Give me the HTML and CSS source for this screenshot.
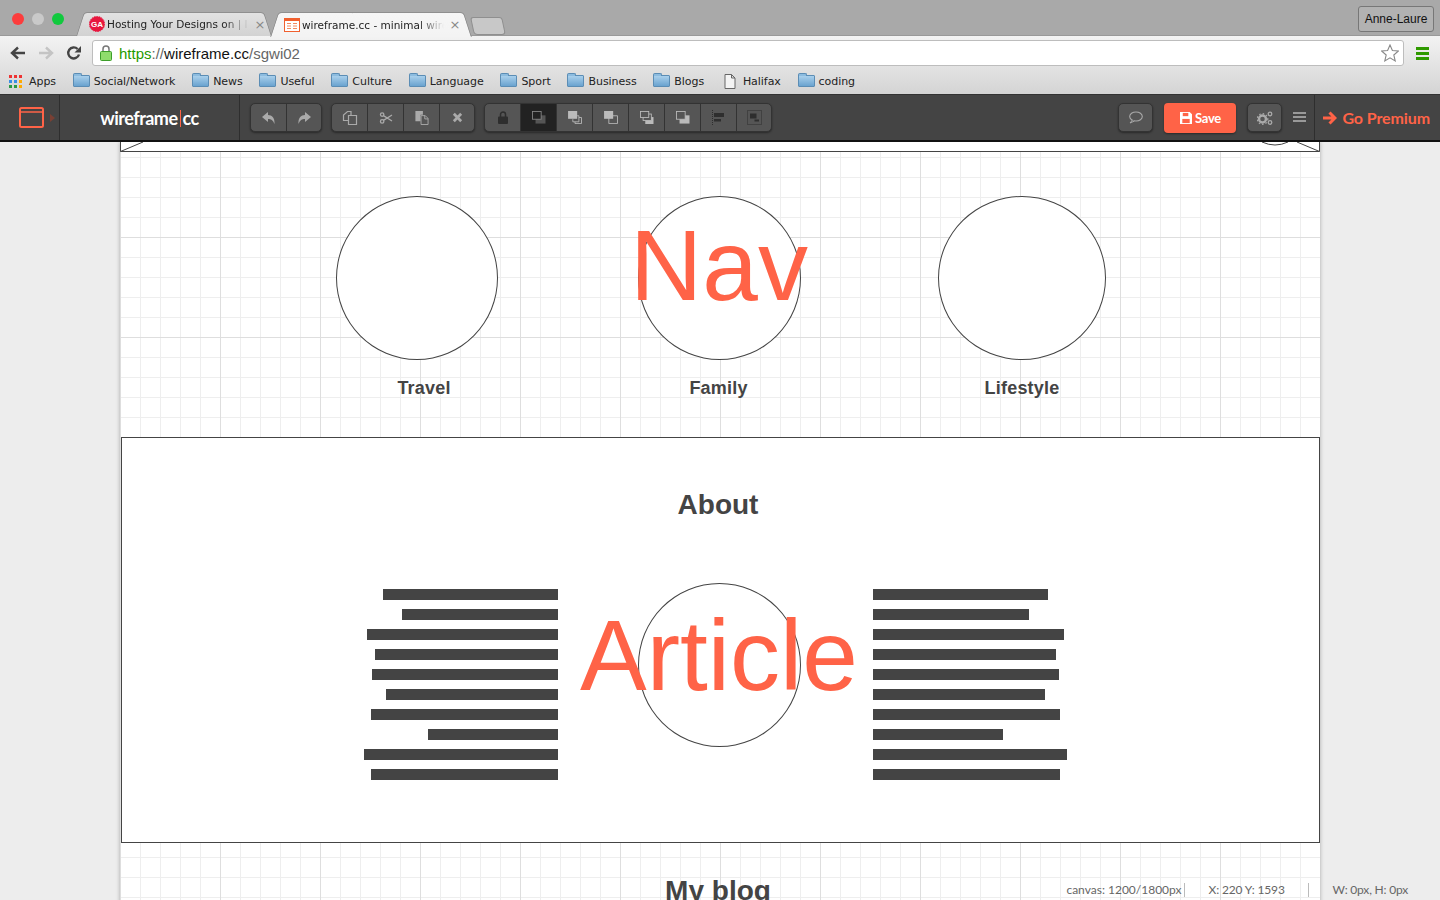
FILE: index.html
```html
<!DOCTYPE html>
<html>
<head>
  <title>wireframe.cc - minimal wireframing tool</title>
  <meta charset="utf-8" />
  <link rel="stylesheet" href="styles.css">
</head>
<body>

<div class="browser">
  <div class="tabstrip">
    <div class="lights"><i class="light red"></i><i class="light grey"></i><i class="light green"></i></div>
    <div class="tabs">
      <div class="tab">
        <svg class="favicon" viewBox="0 0 16 16" width="16" height="16"><circle cx="8" cy="8" r="7.6" fill="#e8173f" stroke="#e8173f" stroke-dasharray="1.5 1"/><text x="8" y="11" text-anchor="middle" class="ga">GA</text></svg>
        <span class="tab-title">Hosting Your Designs on | I</span>
        <span class="tab-x">&#215;</span>
      </div>
      <div class="tab active">
        <svg class="favicon" viewBox="0 0 16 14" width="16" height="14"><rect x=".5" y=".5" width="15" height="13" fill="#fff" stroke="#f0602f"/><rect x="1" y="1" width="14" height="2" fill="#f0602f"/><path d="M3 5.500h4M3 8h4M3 10.500h4M9 5.500h4M9 8h4M9 10.500h4" stroke="#f28a60"/></svg>
        <span class="tab-title">wireframe.cc - minimal wire</span>
        <span class="tab-x">&#215;</span>
      </div>
      <div class="tab-new"></div>
    </div>
    <div class="profile">Anne-Laure</div>
  </div>

  <div class="urlbar">
    <svg class="nav-icon" viewBox="0 0 16 14" width="16" height="14"><path d="M15 7H3M8 1.500 2 7l6 5.500" fill="none" stroke="#444" stroke-width="2.400"/></svg>
    <svg class="nav-icon" viewBox="0 0 16 14" width="16" height="14"><path d="M1 7h12M8 1.500 14 7l-6 5.500" fill="none" stroke="#c4c4c4" stroke-width="2.400"/></svg>
    <svg class="nav-icon" viewBox="0 0 16 16" width="16" height="16"><path d="M13 9.500A5.500 5.500 0 1 1 11.600 4" fill="none" stroke="#444" stroke-width="2.400"/><path d="M15 1v6.500H8.500z" fill="#444"/></svg>
    <div class="omnibox">
      <svg class="lock" viewBox="0 0 12 16" width="12" height="16"><path d="M3 7V4a3 3 0 0 1 6 0v3" fill="none" stroke="#777" stroke-width="1.500"/><rect x=".5" y="6.500" width="11" height="9" rx="1" fill="#8fdc6c" stroke="#3d9e2a"/></svg>
      <span class="url"><span class="url-https">https</span><span class="url-dim">://</span>wireframe.cc<span class="url-dim">/sgwi02</span></span>
      <svg class="star" viewBox="0 0 18 18" width="18" height="18"><path d="M9 1l2.400 5.500 6 .5-4.600 4 1.400 5.900L9 13.800l-5.200 3.100 1.400-5.900-4.600-4 6-.5z" fill="#fff" stroke="#888" stroke-width="1.100"/></svg>
    </div>
    <div class="chrome-menu"><i></i><i></i><i></i></div>
  </div>

  <div class="bookmarks">
    <div class="bookmark"><svg viewBox="0 0 13 13" width="13" height="13"><path d="M0 1.500h3M5 1.500h3M10 1.500h3" stroke="#e33" stroke-width="3"/><path d="M0 6.500h3M5 6.500h3" stroke="#3a8ee6" stroke-width="3"/><path d="M10 6.500h3" stroke="#fa0" stroke-width="3"/><path d="M0 11.500h3M5 11.500h3" stroke="#2a9a44" stroke-width="3"/><path d="M10 11.500h3" stroke="#fa0" stroke-width="3"/></svg><span class="apps-label">Apps</span></div>
    <div class="bookmark"><i class="folder"></i>Social/Network</div>
    <div class="bookmark"><i class="folder"></i>News</div>
    <div class="bookmark"><i class="folder"></i>Useful</div>
    <div class="bookmark"><i class="folder"></i>Culture</div>
    <div class="bookmark"><i class="folder"></i>Language</div>
    <div class="bookmark"><i class="folder"></i>Sport</div>
    <div class="bookmark"><i class="folder"></i>Business</div>
    <div class="bookmark"><i class="folder"></i>Blogs</div>
    <div class="bookmark"><svg class="file" viewBox="0 0 12 15" width="12" height="15"><path d="M1 .5h6.500L11 4v10.500H1zM7.500.5V4H11" fill="#f4f4f4" stroke="#666"/></svg>Halifax</div>
    <div class="bookmark"><i class="folder"></i>coding</div>
  </div>
</div>

<div class="appbar">
  <div class="app-menu">
    <svg viewBox="0 0 25 21" width="25" height="21"><rect x="1" y="1" width="23" height="19" rx="1.500" fill="none" stroke="#ff6347" stroke-width="2"/><path d="M1 5h23" stroke="#ff6347" stroke-width="1.500"/></svg>
    <i class="app-caret"></i>
  </div>
  <div class="brand">wireframe<span class="brand-bar"></span>cc</div>

  <div class="group first">
    <div class="btn"><svg viewBox="0 0 16 14" width="16" height="14"><path d="M7 1 1 6l6 5V8c3 0 5 1 6.500 5C14 7 11 4 7 4z" fill="#aaa"/></svg></div>
    <div class="btn"><svg viewBox="0 0 16 14" width="16" height="14"><path d="M9 1l6 5-6 5V8c-3 0-5 1-6.500 5C2 7 5 4 9 4z" fill="#aaa"/></svg></div>
  </div>
  <div class="group">
    <div class="btn"><svg viewBox="0 0 16 16" width="16" height="16"><path d="M6.500 10.500H1.500V5l4-3.500h3.500V5" fill="none" stroke="#aaa" stroke-width="1.200"/><path d="M6.500 5.500h8v9h-8z" fill="#555" stroke="#aaa" stroke-width="1.200"/></svg></div>
    <div class="btn"><svg viewBox="0 0 16 14" width="14" height="12"><circle cx="3.500" cy="3" r="2" fill="none" stroke="#aaa" stroke-width="1.500"/><circle cx="3.500" cy="11" r="2" fill="none" stroke="#aaa" stroke-width="1.500"/><path d="M5 4.200 15 10.500M5 9.800 15 3.500" stroke="#aaa" stroke-width="1.500"/></svg></div>
    <div class="btn"><svg viewBox="0 0 16 16" width="15" height="15"><path d="M1.500 1h8v4H7v7H1.500z" fill="#aaa"/><path d="M7.500 6h4.500l3 3v6.500H7.500z" fill="#555" stroke="#aaa"/><path d="M11.500 6v3.500H15" fill="none" stroke="#aaa"/></svg></div>
    <div class="btn"><svg viewBox="0 0 12 12" width="11" height="11"><path d="M2 2l8 8M10 2l-8 8" stroke="#aaa" stroke-width="3"/></svg></div>
  </div>
  <div class="group">
    <div class="btn"><svg viewBox="0 0 10 13" width="10" height="13"><path d="M2.500 6V3.500a2.500 2.500 0 0 1 5 0V6" fill="none" stroke="#2e2e2e" stroke-width="1.500"/><rect y="5.500" width="10" height="7.500" rx="1" fill="#2e2e2e"/></svg></div>
    <div class="btn on"><svg viewBox="0 0 16 15" width="14" height="13"><rect x="4" y="5" width="11.500" height="9.500" fill="#555"/><rect x=".5" y=".5" width="10" height="9" fill="#222" stroke="#888"/></svg></div>
    <div class="btn"><svg viewBox="0 0 16 15" width="14" height="13"><path d="M5.500 9.500v3h7v-7h-2M8 12.500v2h7.500v-7h-3" fill="none" stroke="#bbb"/><rect width="10.500" height="9" fill="#bbb"/></svg></div>
    <div class="btn"><svg viewBox="0 0 16 15" width="14" height="13"><path d="M5.500 8v6.500h10v-9H10" fill="none" stroke="#bbb"/><rect width="10.500" height="9" fill="#bbb"/></svg></div>
    <div class="btn"><svg viewBox="0 0 16 15" width="14" height="13"><rect x="6" y="7" width="9.500" height="8" fill="#bbb"/><rect x="3.500" y="3.500" width="9.500" height="7.500" fill="#555" stroke="#bbb"/><rect x=".5" y=".5" width="9.500" height="7" fill="#555" stroke="#bbb"/></svg></div>
    <div class="btn"><svg viewBox="0 0 16 15" width="14" height="13"><rect x="4" y="5" width="11.500" height="9.500" fill="#bbb"/><rect x=".5" y=".5" width="10" height="9" fill="#555" stroke="#bbb"/></svg></div>
    <div class="btn"><svg viewBox="0 0 13 15" width="13" height="15"><path d="M.5 0v15" stroke="#2e2e2e" stroke-dasharray="1 1"/><rect x="2" y="3" width="10" height="4" fill="#2e2e2e"/><rect x="2" y="9" width="7" height="2.500" fill="#2e2e2e"/></svg></div>
    <div class="btn"><svg viewBox="0 0 15 15" width="15" height="15"><rect x=".5" y=".5" width="14" height="14" fill="none" stroke="#2e2e2e" stroke-dasharray="1 1"/><rect x="3" y="3.500" width="6.500" height="5" fill="#2e2e2e"/><rect x="7.500" y="9.500" width="4.500" height="2" fill="#2e2e2e"/></svg></div>
  </div>

  <div class="appbar-right">
    <div class="btn solo"><svg viewBox="0 0 15 13" width="15" height="13"><ellipse cx="8" cy="5.500" rx="6.300" ry="4.500" fill="none" stroke="#aaa" stroke-width="1.100"/><path d="M4.500 9 2 12l4.500-2" fill="#555" stroke="#aaa"/></svg></div>
    <div class="save"><svg viewBox="0 0 13 13" width="12" height="12"><path d="M0 0h10.500L13 2.500V13H0z" fill="#fff"/><rect x="3" y="1" width="6" height="3.500" fill="#ff6347"/><rect x="2.500" y="7.500" width="8" height="4.500" fill="#ff6347"/></svg>Save</div>
    <div class="btn solo"><svg viewBox="0 0 16 14" width="16" height="14"><circle cx="5.500" cy="8" r="3.500" fill="none" stroke="#aaa" stroke-width="2.400"/><circle cx="13" cy="3" r="1.800" fill="none" stroke="#aaa" stroke-width="1.300"/><circle cx="13" cy="11.500" r="1.800" fill="none" stroke="#aaa" stroke-width="1.300"/><circle cx="5.500" cy="8" r="5.300" fill="none" stroke="#aaa" stroke-width="1.200" stroke-dasharray="1.500 2"/></svg></div>
    <div class="menu-icon"><i></i><i></i><i></i></div>
    <div class="premium"><svg viewBox="0 0 15 14" width="15" height="14"><path d="M1 7h11M7.500 1.500 13 7l-5.500 5.500" fill="none" stroke="#ff6347" stroke-width="3"/></svg>Go Premium</div>
  </div>
</div>

<div class="workspace">
  <div class="canvas">
    <svg class="top-image" viewBox="0 0 1200 10" width="1200" height="10">
      <path d="M.5 0v9.500h1199V0" fill="#fff" stroke="#444"/>
      <path d="M.5 9.500 23 0M1199.500 9.500 1177 0" stroke="#444" fill="none"/>
      <path d="M1142 0Q1155 6 1168 0" fill="none" stroke="#444"/>
    </svg>

    <div class="circle travel"></div>
    <div class="circle family"></div>
    <div class="circle lifestyle"></div>
    <div class="big-text nav-text">Nav</div>
    <div class="label travel-label">Travel</div>
    <div class="label family-label">Family</div>
    <div class="label lifestyle-label">Lifestyle</div>

    <div class="about-box"></div>
    <div class="heading about-heading">About</div>
    <div class="lines lines-left">
      <i style="width:175px"></i><i style="width:156px"></i><i style="width:191px"></i><i style="width:183px"></i><i style="width:186px"></i><i style="width:172px"></i><i style="width:187px"></i><i style="width:130px"></i><i style="width:194px"></i><i style="width:187px"></i>
    </div>
    <div class="circle article"></div>
    <div class="big-text article-text">Article</div>
    <div class="lines lines-right">
      <i style="width:175px"></i><i style="width:156px"></i><i style="width:191px"></i><i style="width:183px"></i><i style="width:186px"></i><i style="width:172px"></i><i style="width:187px"></i><i style="width:130px"></i><i style="width:194px"></i><i style="width:187px"></i>
    </div>
    <div class="heading blog-heading">My blog</div>
  </div>

  <div class="status">
    <span class="status-item canvas-size">canvas: 1200/1800px</span>
    <span class="status-item coords">X: 220 Y: 1593</span>
    <span class="status-last">W: 0px, H: 0px</span>
  </div>
</div>

</body>
</html>
```

FILE: styles.css
```css
html, body {
  margin: 0;
  height: 900px;
  overflow: hidden;
}
body {
  font-family: "DejaVu Sans", sans-serif;
  background: #ededed;
}
i {
  display: block;
}

/* browser chrome */
.browser {
  height: 94px;
  background: linear-gradient(#f3f3f3 36px, #d4d4d4 94px);
}
.tabstrip {
  height: 36px;
  background: #a9a9a9;
  border-bottom: 1px solid #999;
  box-sizing: border-box;
  display: flex;
  position: relative;
}
.lights {
  display: flex;
  gap: 8px;
  padding: 13px 0 0 12px;
  width: 64px;
}
.light {
  width: 12px;
  height: 12px;
  border-radius: 50%;
}
.red { background: #fc3c3c; }
.grey { background: #c9c9c9; }
.green { background: #11c93e; }
.tabs {
  display: flex;
  height: 24px;
  margin-top: 12px;
}
.tab {
  position: relative;
  isolation: isolate;
  width: 196px;
  height: 24px;
  box-sizing: border-box;
  display: flex;
  align-items: center;
  padding: 0 6px 0 13px;
  font-size: 10.5px;
  color: #222;
}
.tab::before, .tab::after {
  content: "";
  position: absolute;
  z-index: -1;
  top: 0;
  bottom: 0;
  width: 55%;
  background: linear-gradient(#e2e2e2, #d2d2d2);
  border-top: 1px solid #8f8f8f;
}
.tab::before {
  left: 0;
  border-left: 1px solid #8f8f8f;
  border-radius: 4px 0 0 0;
  transform: skewX(-18deg);
  transform-origin: bottom left;
}
.tab::after {
  right: 0;
  border-right: 1px solid #8f8f8f;
  border-radius: 0 4px 0 0;
  transform: skewX(18deg);
  transform-origin: bottom right;
}
.tab.active {
  z-index: 1;
  margin-left: -2px;
  width: 202px;
  padding: 0 11px 0 14px;
  height: 25px;
}
.tab.active::before, .tab.active::after {
  background: linear-gradient(#f6f6f6, #f3f3f3);
}
.favicon {
  flex: none;
  margin-right: 2px;
}
.ga {
  font-family: "Liberation Sans", sans-serif;
  font-size: 8px;
  font-weight: bold;
  fill: #fff;
}
.tab-title {
  flex: 1;
  white-space: nowrap;
  overflow: hidden;
  -webkit-mask-image: linear-gradient(to right, #000 82%, transparent 100%);
  mask-image: linear-gradient(to right, #000 82%, transparent 100%);
}
.tab-x {
  flex: none;
  width: 12px;
  margin-left: 5px;
  font-size: 13px;
  line-height: 15px;
  color: #888;
  text-align: center;
}
.tab-new {
  width: 30px;
  height: 16px;
  margin: 5px 0 0 0;
  background: #c8c8c8;
  border: 1px solid #8f8f8f;
  border-radius: 3px 3px 4px 4px;
  transform: skewX(12deg);
}
.profile {
  position: absolute;
  right: 6px;
  top: 6px;
  width: 76px;
  height: 26px;
  box-sizing: border-box;
  border: 1px solid #777;
  border-radius: 3px;
  background: #b2b2b2;
  font-family: "Liberation Sans", sans-serif;
  font-size: 12px;
  line-height: 25px;
  text-align: center;
  color: #111;
}

.urlbar {
  height: 34px;
  display: flex;
  align-items: center;
  padding: 0 11px 0 10px;
}
.nav-icon {
  flex: none;
  margin-right: 12px;
}
.omnibox {
  margin-left: -2px;
  flex: 1;
  height: 26px;
  box-sizing: border-box;
  background: #fff;
  border: 1px solid #bdbdbd;
  border-radius: 3px;
  display: flex;
  align-items: center;
  padding: 0 4px 0 7px;
}
.lock {
  flex: none;
  margin-right: 7px;
}
.url {
  flex: 1;
  font-family: "Liberation Sans", sans-serif;
  font-size: 15px;
  color: #111;
}
.url-https { color: #1f9a00; }
.url-dim { color: #666; }
.chrome-menu {
  margin-left: 12px;
  width: 13px;
}
.chrome-menu i {
  height: 3px;
  background: #2f9a00;
  margin: 2px 0;
}

.bookmarks {
  height: 24px;
  display: flex;
  align-items: center;
  gap: 16.7px;
  padding: 0 0 2px 9px;
  box-sizing: border-box;
  font-size: 11px;
  letter-spacing: -0.04px;
  color: #222;
}
.bookmark {
  display: flex;
  align-items: center;
  white-space: nowrap;
}
.apps-label {
  margin-left: 7px;
}
.folder {
  position: relative;
  width: 17px;
  height: 12px;
  margin-right: 4px;
  box-sizing: border-box;
  background: linear-gradient(#a9d0ec, #6aa3cf);
  border: 1px solid #5b8db5;
  border-radius: 1px;
}
.folder::before {
  content: "";
  position: absolute;
  left: -1px;
  top: -3px;
  width: 7px;
  height: 2px;
  background: #8dbcdf;
  border: 1px solid #5b8db5;
  border-bottom: 0;
  border-radius: 2px 2px 0 0;
}
.file {
  margin: 0 7px 0 3px;
}

/* app toolbar */
.appbar {
  height: 48px;
  box-sizing: border-box;
  background: #444;
  border-top: 1px solid #333;
  border-bottom: 2px solid #111;
  display: flex;
  align-items: stretch;
}
.app-menu {
  flex: none;
  width: 40px;
  padding-left: 19px;
  border-right: 1px solid #2e2e2e;
  display: flex;
  align-items: center;
}
.app-caret {
  margin-left: 6px;
  border-left: 5px solid #7a4034;
  border-top: 4px solid transparent;
  border-bottom: 4px solid transparent;
}
.brand {
  width: 180px;
  flex: none;
  box-sizing: border-box;
  border-right: 1px solid #2e2e2e;
  display: flex;
  align-items: center;
  justify-content: center;
  padding-top: 1px;
  font-family: Lato, sans-serif;
  font-weight: 700;
  font-size: 18px;
  letter-spacing: -0.5px;
  color: #fff;
}
.brand-bar {
  width: 1px;
  height: 17px;
  margin: 0 2px;
  background: #ff6347;
}
.group {
  align-self: flex-start;
  margin: 8px 0 0 9px;
  display: flex;
  height: 29px;
  box-sizing: border-box;
  background: #555;
  border: 1px solid #333;
  border-radius: 5px;
  box-shadow: 0 1px 2px rgba(0,0,0,.4);
}
.group.first { margin-left: 10px; }
.btn {
  width: 36px;
  display: flex;
  align-items: center;
  justify-content: center;
  border-left: 1px solid #333;
  box-sizing: border-box;
}
.btn:first-child {
  border-left: 0;
  width: 35px;
}
.btn:last-child {
  width: 35px;
}
.btn.on {
  background: #222;
}
.btn.solo {
  width: 35px;
  height: 29px;
  margin-top: 8px;
  background: #555;
  border: 1px solid #333;
  border-radius: 5px;
  box-shadow: 0 1px 2px rgba(0,0,0,.4);
}
.appbar-right {
  margin-left: auto;
  display: flex;
  align-items: flex-start;
}
.save {
  width: 72px;
  height: 30px;
  margin: 8px 11px 0 11px;
  background: #ff6347;
  border-radius: 4px;
  box-shadow: 0 1px 2px rgba(0,0,0,.4);
  display: flex;
  align-items: center;
  justify-content: center;
  gap: 3px;
  font-family: Lato, sans-serif;
  font-weight: 700;
  font-size: 13px;
  letter-spacing: -0.3px;
  color: #fff;
}
.menu-icon {
  width: 13px;
  margin: 17px 8px 0 11px;
}
.menu-icon i {
  height: 2px;
  margin-bottom: 2px;
  background: #999;
}
.premium {
  align-self: stretch;
  border-left: 1px solid #2e2e2e;
  display: flex;
  align-items: center;
  gap: 5px;
  padding: 0 10px 0 7px;
  font-family: Lato, sans-serif;
  font-weight: 700;
  font-size: 16px;
  letter-spacing: -0.1px;
  color: #ff6347;
}

/* the canvas is a free layout, the shapes sit where the wireframe put them */
.workspace {
  position: relative;
  height: 758px;
  overflow: hidden;
  background: #ededed;
}
.canvas {
  position: relative;
  width: 1200px;
  height: 900px;
  margin-left: 120px;
  background-color: #fff;
  background-image:
    linear-gradient(to right, #dedede 1px, transparent 1px),
    linear-gradient(to bottom, #dedede 1px, transparent 1px),
    linear-gradient(to right, #eee 1px, transparent 1px),
    linear-gradient(to bottom, #eee 1px, transparent 1px);
  background-size: 100px 100px, 100px 100px, 20px 20px, 20px 20px;
  background-position: 0 0, 0 95px, 0 0, 0 15px;
  box-shadow: 0 0 4px rgba(0,0,0,.3);
}
.top-image {
  position: absolute;
  left: 0;
  top: 0;
  display: block;
}
.circle {
  position: absolute;
  box-sizing: border-box;
  border: 1px solid #444;
  border-radius: 50%;
  height: 164px;
  background: #fff;
}
.travel { left: 216px; top: 54px; width: 162px; }
.family { left: 518px; top: 54px; width: 163px; }
.lifestyle { left: 818px; top: 54px; width: 168px; }
.article { left: 518px; top: 441px; width: 163px; }
.big-text {
  position: absolute;
  width: 400px;
  font-family: "Liberation Sans", sans-serif;
  font-size: 100px;
  line-height: 100px;
  text-align: center;
  color: #ff6347;
}
.nav-text { left: 399px; top: 73px; }
.article-text { left: 399px; top: 463px; }
.label, .heading {
  position: absolute;
  width: 200px;
  font-family: "Liberation Sans", sans-serif;
  font-weight: bold;
  text-align: center;
  color: #444;
}
.label {
  top: 236px;
  font-size: 18px;
  line-height: 20px;
  letter-spacing: 0.2px;
}
.travel-label { left: 204px; }
.family-label { left: 498.500px; }
.lifestyle-label { left: 802px; }
.about-box {
  position: absolute;
  left: 1px;
  top: 295px;
  width: 1199px;
  height: 406px;
  box-sizing: border-box;
  background: #fff;
  border: 1px solid #444;
}
.heading {
  font-size: 28px;
  line-height: 32px;
}
.about-heading { left: 498px; top: 347px; }
.blog-heading { left: 498px; top: 733px; }
.lines {
  position: absolute;
  top: 447px;
  width: 194px;
  display: flex;
  flex-direction: column;
  gap: 9px;
}
.lines i {
  height: 11px;
  background: #444;
}
.lines-left { left: 244px; align-items: flex-end; }
.lines-right { left: 753px; align-items: flex-start; }

.status {
  position: absolute;
  right: 32px;
  bottom: 3px;
  display: flex;
  align-items: center;
  font-family: Lato, sans-serif;
  font-size: 12px;
  line-height: 14px;
  letter-spacing: -0.2px;
  color: #666;
}
.status-item {
  border-right: 1px solid #bbb;
  box-sizing: border-box;
}
.canvas-size {
  letter-spacing: 0;
  padding-right: 2px;
  margin-right: 24px;
}
.coords {
  letter-spacing: -0.15px;
  width: 100px;
  margin-right: 24px;
}
```
